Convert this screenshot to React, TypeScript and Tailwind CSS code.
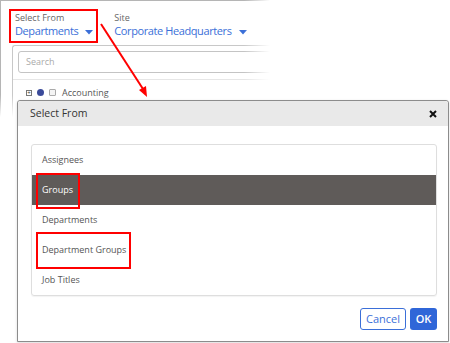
import React from "react";

const font = { fontFamily: '"Open Sans", "Liberation Sans", sans-serif' };

function Caret() {
  return (
    <svg width="8" height="5" viewBox="0 0 8 5" className="ml-[7px] mt-[3px]">
      <path d="M0 0 L8 0 L4 4.5 Z" fill="#3b6fd8" />
    </svg>
  );
}

function Background() {
  return (
    <div className="w-[450px] h-[130px] border-t border-l border-[#b5b5b5] flex flex-col">
      <div className="flex pl-[14px] pt-[11px] gap-[21px]">
        <div className="flex flex-col">
          <span className="text-[9px] leading-[11px] text-[#666]">Select From</span>
          <span className="flex items-center text-[11px] leading-[16px] text-[#3b6fd8] tracking-[-0.4px]">
            Departments
            <Caret />
          </span>
        </div>
        <div className="flex flex-col">
          <span className="text-[9px] leading-[11px] text-[#666]">Site</span>
          <span className="flex items-center text-[11px] leading-[16px] text-[#3b6fd8] tracking-[-0.4px]">
            Corporate Headquarters
            <Caret />
          </span>
        </div>
      </div>
      <div className="ml-[11px] mt-[6px] border-t border-l border-[#c8c8c8] rounded-tl-[3px] flex-1 flex flex-col">
        <div className="pl-[5px] pt-[5px] pb-[6px] border-b border-[#e6e6e6]">
          <div className="h-[22px] border border-[#c4c4c4] rounded-[3px] flex items-center pl-[7px] text-[9px] text-[#aaa]">
            Search
          </div>
        </div>
        <div className="flex items-center pl-[13px] pt-[6px] gap-[5px] text-[9px] text-[#555]">
          <span className="w-[6px] h-[6px] border border-[#777] flex items-center justify-center text-[6px] leading-none text-[#333]">
            +
          </span>
          <span className="w-[7px] h-[7px] rounded-full bg-[#3a4a9a]" />
          <span className="w-[7px] h-[7px] border border-[#aaa] rounded-[1px] bg-[#f4f4f4]" />
          <span className="ml-[1px]">Accounting</span>
        </div>
      </div>
    </div>
  );
}

export default function App() {
  const items = ["Assignees", "Groups", "Departments", "Department Groups", "Job Titles"];
  return (
    <div className="relative w-[450px] h-[343px] bg-white overflow-hidden" style={font}>
      <Background />
      {/* fades */}
      <div className="absolute left-[244px] top-0 w-[26px] h-[130px] bg-linear-to-r from-white/0 to-white" />
      <div className="absolute left-[270px] top-0 w-[180px] h-[130px] bg-white" />
      <div className="absolute left-0 top-[95px] w-[450px] h-[22px] bg-linear-to-b from-white/0 to-white" />
      <div className="absolute left-0 top-[117px] w-[450px] h-[20px] bg-white" />

      {/* highlight on background */}
      <div className="absolute left-[9px] top-[9px] w-[89px] h-[34px] border-2 border-[#ff0000]" />

      {/* arrow */}
      <svg className="absolute left-0 top-0" width="450" height="343">
        <line x1="101" y1="24" x2="143" y2="89" stroke="#ff0000" strokeWidth="2" />
        <path d="M147 97 L139 90 L146 86 Z" fill="#ff0000" />
      </svg>

      {/* dialog */}
      <div className="absolute left-[17px] top-[100px] w-[432px] h-[242px] border border-[#8c8c8c] rounded-t-[3px] bg-white flex flex-col shadow-[0_1px_3px_rgba(0,0,0,0.15)]">
        <div className="h-[25px] bg-[#e9e9e9] flex items-center justify-between pl-[12px] pr-[11px] rounded-t-[3px]">
          <span className="text-[10.5px] text-[#333]">Select From</span>
          <svg width="8" height="8" viewBox="0 0 8 8">
            <path d="M1 1 L7 7 M7 1 L1 7" stroke="#111" strokeWidth="2" />
          </svg>
        </div>
        <div className="flex-1 flex flex-col pl-[13px] pr-[11px] pt-[18px] pb-[10px]">
          <div className="border border-[#dedede] rounded-[3px] flex flex-col shadow-[0_1px_1px_rgba(0,0,0,0.05)]">
            {items.map((it) => (
              <div
                key={it}
                className={
                  it === "Groups"
                    ? "h-[30px] flex items-center pl-[10px] text-[9px] bg-[#5f5b59] text-white"
                    : "h-[30px] flex items-center pl-[10px] text-[9px] text-[#555]"
                }
              >
                {it}
              </div>
            ))}
          </div>
          <div className="flex justify-end gap-[4px] mt-[12px]">
            <button className="w-[46px] h-[22px] border border-[#3b6fd8] rounded-[3px] text-[11px] text-[#3b6fd8] bg-white">
              Cancel
            </button>
            <button className="w-[27px] h-[22px] rounded-[3px] text-[11px] text-white bg-[#2f66d8] font-semibold">
              OK
            </button>
          </div>
        </div>
      </div>

      {/* highlights in dialog */}
      <div className="absolute left-[36px] top-[173px] w-[44px] h-[36px] border-2 border-[#ff0000]" />
      <div className="absolute left-[36px] top-[232px] w-[95px] h-[37px] border-2 border-[#ff0000]" />
    </div>
  );
}
